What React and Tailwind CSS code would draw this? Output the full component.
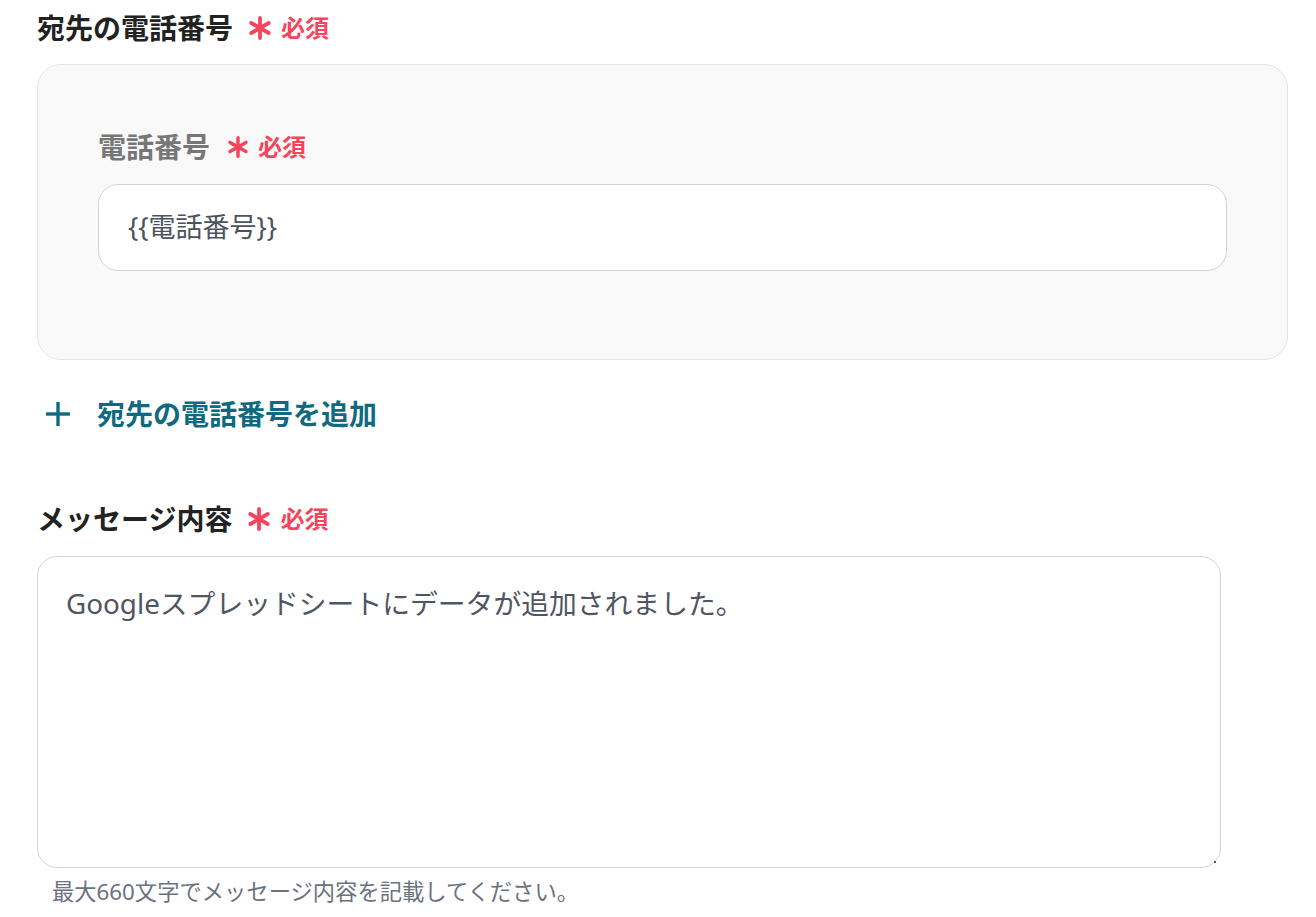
import React from "react";

const font = "font-['Noto_Sans','Noto_Sans_CJK_JP',sans-serif]";

const Asterisk = ({ size = 24 }) => (
  <svg width={size} height={size} viewBox="0 0 24 24" fill="none">
    <g stroke="#f5455c" strokeWidth="3.8" strokeLinecap="round">
      <line x1="12" y1="2" x2="12" y2="22" />
      <line x1="3.3" y1="7" x2="20.7" y2="17" />
      <line x1="3.3" y1="17" x2="20.7" y2="7" />
    </g>
  </svg>
);

const Required = ({ size = 24, gap = "ml-[15px]" }) => (
  <div className={`flex items-center ${gap}`}>
    <Asterisk size={size} />
    <span className="ml-[9px] text-[24px] font-bold text-[#f5455c] leading-none">必須</span>
  </div>
);

const App = () => {
  return (
    <div className={`w-[1316px] h-[917px] bg-white pl-[37px] ${font}`}>
      {/* 宛先の電話番号 */}
      <div className="flex items-center h-[56px]">
        <h2 className="text-[28px] font-bold text-[#222222] leading-none">宛先の電話番号</h2>
        <Required />
      </div>

      <div className="mt-[8px] w-[1251px] border border-[#e4e4e4] bg-[#f9f9f9] rounded-[24px] pt-[61px] pb-[88px] px-[60px]">
        <div className="flex items-center h-[42px]">
          <span className="text-[28px] font-bold text-[#777777] leading-none">電話番号</span>
          <Required size={22} gap="ml-[17px]" />
        </div>
        <div className="mt-[16px] h-[87px] bg-white border-[1.5px] border-[#d0d4da] rounded-[20px] flex items-center pl-[29px]">
          <span className="text-[27px] text-[#4b5360]">{"{{電話番号}}"}</span>
        </div>
      </div>

      {/* add */}
      <button className="mt-[34px] h-[40px] flex items-center text-[#0f6a80]">
        <svg width="26" height="26" viewBox="0 0 26 26" className="ml-[8px]">
          <g stroke="#0f6a80" strokeWidth="3.4" strokeLinecap="butt">
            <line x1="13" y1="1" x2="13" y2="25" />
            <line x1="1" y1="13" x2="25" y2="13" />
          </g>
        </svg>
        <span className="ml-[26px] text-[28px] font-bold leading-none">宛先の電話番号を追加</span>
      </button>

      {/* メッセージ内容 */}
      <div className="mt-[65px] flex items-center h-[40px]">
        <h2 className="text-[28px] font-bold text-[#222222] leading-none">メッセージ内容</h2>
        <Required />
      </div>

      <div className="relative mt-[17px] w-[1184px] h-[312px] border-[1.5px] border-[#d0d4da] rounded-[20px] bg-white pt-[26px] px-[28px]">
        <p className="text-[27.8px] leading-[40px] text-[#4f5662]">
          Googleスプレッドシートにデータが追加されました。
        </p>
        <span className="absolute right-[4px] bottom-[4px] w-[2px] h-[2px] bg-[#555555]" />
      </div>

      <p className="mt-[9px] pl-[15px] h-[30px] flex items-center text-[22.3px] text-[#6b7280]">
        最大660文字でメッセージ内容を記載してください。
      </p>
    </div>
  );
};

export default App;
